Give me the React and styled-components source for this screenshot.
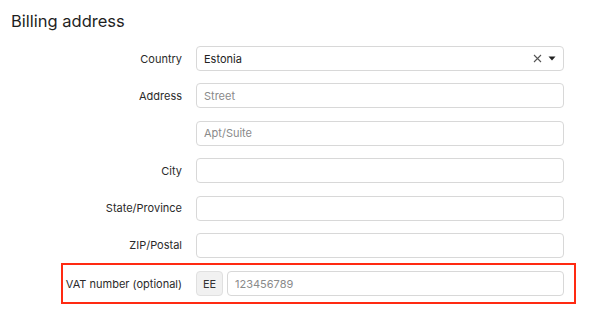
import styled, { createGlobalStyle } from "styled-components";

/* ---------- GLOBAL ---------- */

const Global = createGlobalStyle`
  body {
    margin: 0;
    background: #ffffff;
    font-family: Inter, "Liberation Sans", sans-serif;
    color: #222;
  }
  input::placeholder {
    color: #8a8a8a;
    opacity: 1;
  }
`;

/* ---------- STYLES ---------- */

const Page = styled.div`
  width: 600px;
  height: 311px;
  padding: 10px 0 0 11px;
  box-sizing: border-box;
`;

const Title = styled.h2`
  margin: 0 0 14px;
  font-size: 16.5px;
  font-weight: 400;
  line-height: 22px;
  color: #1f1f1f;
`;

const Form = styled.div`
  display: flex;
  flex-direction: column;
  gap: 12.4px;
  margin-left: -11px;
`;

const Row = styled.div`
  display: grid;
  grid-template-columns: ${({ $highlight }) => ($highlight ? "119px" : "182px")} 368px;
  column-gap: 14px;
  align-items: center;
  ${({ $highlight }) =>
    $highlight &&
    `
    margin: -7px 0 0 61px;
    width: 515px;
    box-sizing: border-box;
    border: 2px solid #ff2a12;
    padding: 6px 0 6px 0;
  `}
`;

const Label = styled.label`
  font-size: 11px;
  color: #2a2a2a;
  text-align: right;
  white-space: nowrap;
`;

const Field = styled.div`
  position: relative;
  display: flex;
  gap: 4px;
`;

const Input = styled.input`
  flex: 1;
  min-width: 0;
  height: 25px;
  box-sizing: border-box;
  border: 1px solid #d8d8d8;
  border-radius: 4px;
  padding: 0 7px;
  font-family: inherit;
  font-size: 11px;
  color: #222;
  background: #fff;
  outline: none;
`;

const Addon = styled.span`
  display: flex;
  align-items: center;
  justify-content: center;
  width: 27px;
  height: 25px;
  box-sizing: border-box;
  border: 1px solid #e0e0e0;
  border-radius: 4px;
  background: #f1f1f1;
  font-size: 11px;
  color: #333;
`;

const Controls = styled.div`
  position: absolute;
  right: 8px;
  top: 0;
  bottom: 0;
  display: flex;
  align-items: center;
  gap: 6px;
`;

/* ---------- COMPONENT ---------- */

const rows = [
  { label: "Address", placeholder: "Street" },
  { label: "", placeholder: "Apt/Suite" },
  { label: "City" },
  { label: "State/Province" },
  { label: "ZIP/Postal" },
];

export default function App() {
  return (
    <Page>
      <Global />
      <Title>Billing address</Title>
      <Form>
        <Row>
          <Label>Country</Label>
          <Field>
            <Input defaultValue="Estonia" readOnly />
            <Controls>
              <svg width="9" height="9" viewBox="0 0 9 9">
                <path d="M1 1l7 7M8 1l-7 7" stroke="#555" strokeWidth="1.1" />
              </svg>
              <svg width="8" height="5" viewBox="0 0 8 5">
                <path d="M0.5 0.5h7L4 4.5z" fill="#222" />
              </svg>
            </Controls>
          </Field>
        </Row>
        {rows.map((r, i) => (
          <Row key={i}>
            <Label>{r.label}</Label>
            <Field>
              <Input placeholder={r.placeholder} />
            </Field>
          </Row>
        ))}
        <Row $highlight>
          <Label>VAT number (optional)</Label>
          <Field>
            <Addon>EE</Addon>
            <Input placeholder="123456789" />
          </Field>
        </Row>
      </Form>
    </Page>
  );
}
